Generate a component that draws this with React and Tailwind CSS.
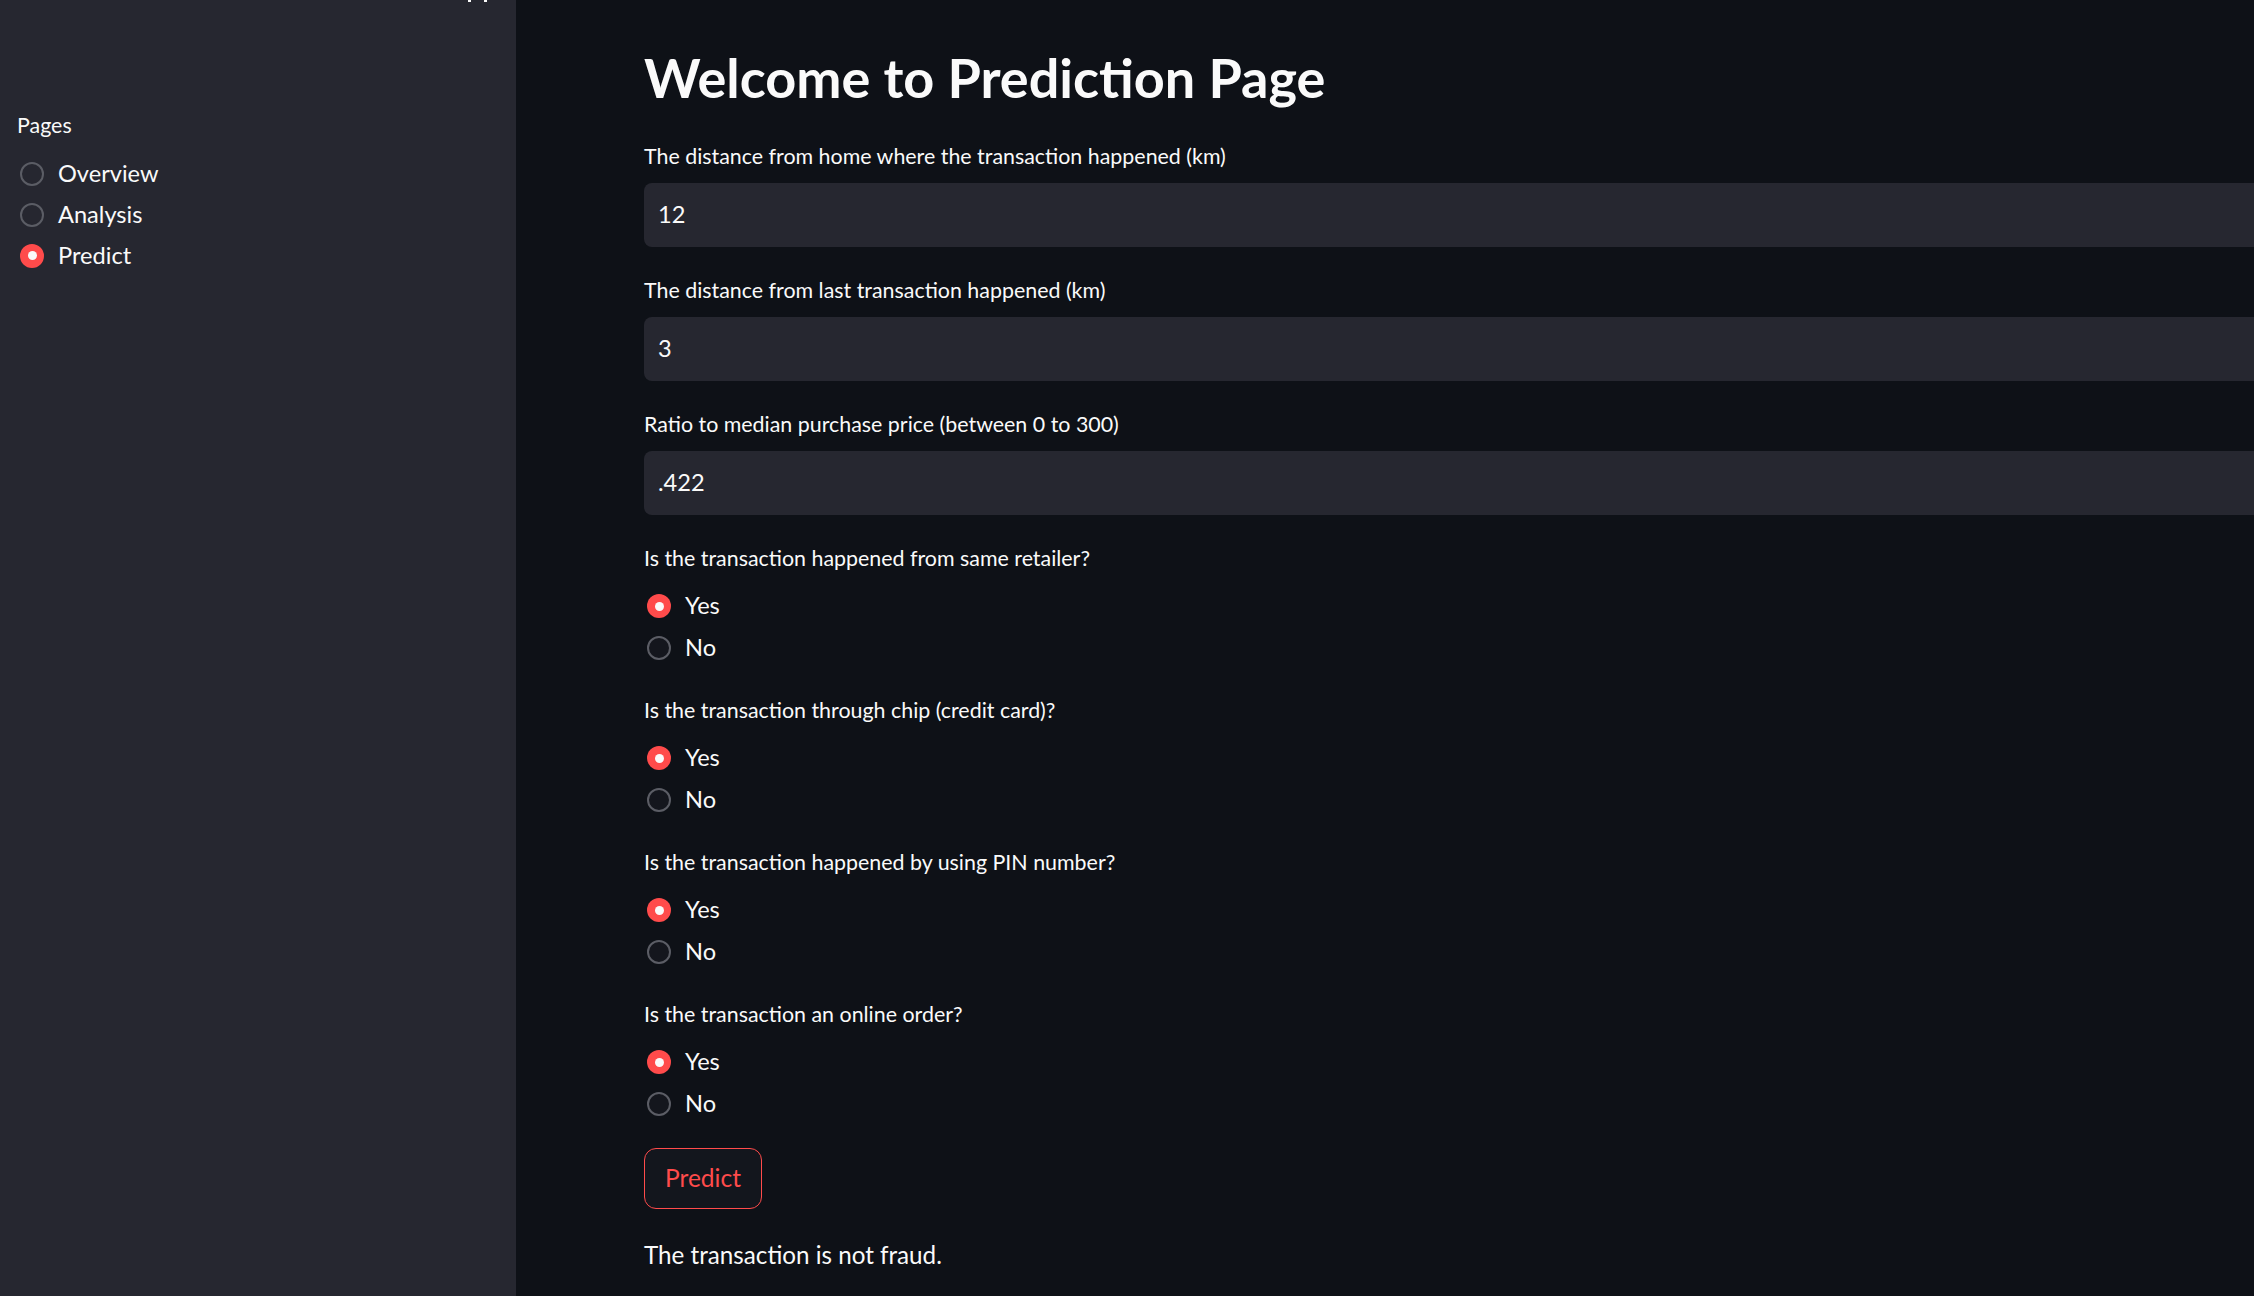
import React, { useState } from "react";

const font = { fontFamily: "Lato, 'Noto Sans', sans-serif" };

const Dot = ({ checked, sidebar }) =>
    checked ? (
        <span className="flex items-center justify-center w-[24px] h-[24px] rounded-full bg-[#ff4b4b] shrink-0">
            <span className="w-[9px] h-[9px] rounded-full bg-[#fafafa]"></span>
        </span>
    ) : (
        <span
            className={`w-[24px] h-[24px] rounded-full border-2 border-[#5b5d65] shrink-0 ${
                sidebar ? "bg-[#262730]" : "bg-[#14161d]"
            }`}
        ></span>
    );

const RadioRow = ({ label, checked, onClick, sidebar }) => (
    <div
        onClick={onClick}
        className={`flex items-center cursor-pointer ${sidebar ? "h-[41px] gap-[14px]" : "h-[42px] gap-[14px] pl-[3px]"}`}
    >
        <Dot checked={checked} sidebar={sidebar} />
        <span className="text-[23.6px] text-[#fafafa] leading-none">{label}</span>
    </div>
);

const Question = ({ label, value, setValue, first }) => (
    <div className={first ? "mt-[28px]" : "mt-[26px]"}>
        <div className="h-[30px] leading-[30px] text-[21.4px] text-[#fafafa]">{label}</div>
        <div className="mt-[12px]">
            <RadioRow label="Yes" checked={value === "Yes"} onClick={() => setValue("Yes")} />
            <RadioRow label="No" checked={value === "No"} onClick={() => setValue("No")} />
        </div>
    </div>
);

const NumberInput = ({ label, value, first }) => (
    <div className={first ? "mt-[23px]" : "mt-[28px]"}>
        <div className="h-[30px] leading-[30px] text-[21.4px] text-[#fafafa]">{label}</div>
        <div className="mt-[12px] h-[64px] bg-[#262730] rounded-l-[8px] flex items-center pl-[14px] w-[calc(100%+40px)]">
            <span className="text-[23.6px] text-[#fafafa]">{value}</span>
        </div>
    </div>
);

export default function App() {
    const [page, setPage] = useState("Predict");
    const [retailer, setRetailer] = useState("Yes");
    const [chip, setChip] = useState("Yes");
    const [pin, setPin] = useState("Yes");
    const [online, setOnline] = useState("Yes");

    return (
        <div className="flex w-full h-[1296px] overflow-hidden bg-[#0e1117]" style={font}>
            {/* sidebar */}
            <div className="relative w-[516px] shrink-0 h-full bg-[#262730] pl-[17px] pt-[110px]">
                <div className="absolute top-0 left-[468px] flex gap-[13px]">
                    <span className="w-[3px] h-[2px] bg-[#fafafa]"></span>
                    <span className="w-[3px] h-[2px] bg-[#fafafa]"></span>
                </div>
                <div className="h-[30px] leading-[30px] text-[21.4px] text-[#fafafa]">Pages</div>
                <div className="mt-[13px] pl-[3px]">
                    {["Overview", "Analysis", "Predict"].map((p) => (
                        <RadioRow key={p} label={p} sidebar checked={page === p} onClick={() => setPage(p)} />
                    ))}
                </div>
            </div>

            {/* main */}
            <div className="flex-1 min-w-0 pl-[128px] pt-[38px] overflow-hidden">
                <h1 className="h-[80px] leading-[80px] text-[54px] font-bold text-[#fafafa]">
                    Welcome to Prediction Page
                </h1>

                <NumberInput first label="The distance from home where the transaction happened (km)" value="12" />
                <NumberInput label="The distance from last transaction happened (km)" value="3" />
                <NumberInput label="Ratio to median purchase price (between 0 to 300)" value=".422" />

                <Question first label="Is the transaction happened from same retailer?" value={retailer} setValue={setRetailer} />
                <Question label="Is the transaction through chip (credit card)?" value={chip} setValue={setChip} />
                <Question label="Is the transaction happened by using PIN number?" value={pin} setValue={setPin} />
                <Question label="Is the transaction an online order?" value={online} setValue={setOnline} />

                <button className="mt-[23px] h-[61px] px-[20px] rounded-[12px] border border-[#ff4b4b] bg-[#13161d] text-[#ff4b4b] text-[24.5px]">
                    Predict
                </button>

                <div className="mt-[31px] h-[30px] leading-[30px] text-[24.2px] text-[#fafafa]">
                    The transaction is not fraud.
                </div>
            </div>
        </div>
    );
}
